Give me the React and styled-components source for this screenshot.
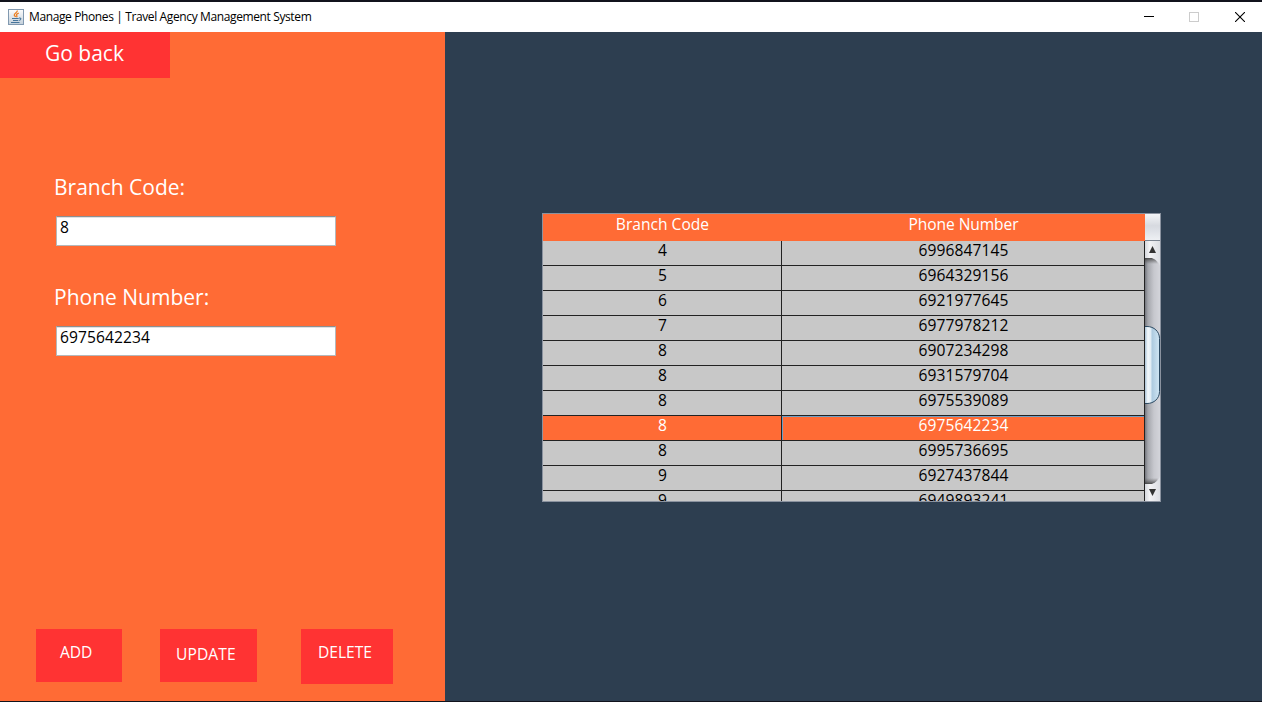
import React from "react";
import styled, { createGlobalStyle } from "styled-components";

const Global = createGlobalStyle`
  * { box-sizing: border-box; }
  body { margin: 0; background: #11131c; overflow: hidden; }
`;

const Screen = styled.div`
  width: 1262px;
  height: 702px;
  padding: 2px 0 1px;
  display: flex;
  flex-direction: column;
  background: #11131c;
  font-family: "Open Sans", "Noto Sans", sans-serif;
`;

const TitleBar = styled.header`
  height: 30px;
  flex: none;
  display: flex;
  align-items: center;
  padding-left: 8px;
  background: #fff;
`;

const Title = styled.h1`
  flex: 1;
  margin: 0 0 0 5px;
  font: 400 12px/16px "Open Sans", "Noto Sans", sans-serif;
  letter-spacing: -0.38px;
  color: #000;
`;

const WindowButton = styled.button`
  width: ${(p) => p.$w || 46}px;
  height: 30px;
  padding: 0 0 0 2px;
  border: 0;
  background: none;
  display: grid;
  place-items: center;
`;

const Body = styled.main`
  flex: 1;
  display: flex;
  min-height: 0;
`;

const FormPanel = styled.section`
  width: 445px;
  display: flex;
  flex-direction: column;
  background: #ff6b35;
`;

const Text = styled.span`
  display: block;
  white-space: nowrap;
  letter-spacing: ${(p) => p.$spacing || 0}px;
`;

const BackButton = styled.button`
  width: 170px;
  height: 46px;
  padding: 0 0 4px 45px;
  border: 0;
  background: #ff3333;
  color: #fff;
  display: flex;
  align-items: center;
  font: 400 21px/26px "Open Sans", sans-serif;
`;

const Fields = styled.div`
  padding: 95px 0 0 54px;
  display: flex;
  flex-direction: column;
  gap: 38px;
`;

const Field = styled.label`
  display: block;
  height: 72px;
  color: #fff;
  font: 400 21px/28px "Open Sans", sans-serif;
`;

const Input = styled.div`
  width: 280px;
  height: 30px;
  margin: 15px 0 0 2px;
  padding: 0 3px;
  border: 1px solid #b4b8bb;
  border-top-color: #8d8f91;
  background: #fff;
  box-shadow: inset 0 1px 0 #dfe1e3;
  color: #000;
  font: 400 15.6px/21px "Open Sans", sans-serif;
`;

const Actions = styled.div`
  margin-top: auto;
  padding: 0 52px 17px 36px;
  display: flex;
  align-items: flex-start;
`;

const ActionButton = styled.button`
  width: ${(p) => p.$w}px;
  height: ${(p) => p.$h}px;
  margin: 0 ${(p) => p.$gap || 0}px 0 0;
  padding: ${(p) => p.$top}px 0 0 ${(p) => p.$left}px;
  border: 0;
  background: #ff3333;
  color: #fff;
  display: flex;
  align-items: flex-start;
  font: 400 15.6px/20px "Open Sans", sans-serif;
`;

const DataPanel = styled.section`
  flex: 1;
  padding: 181px 0 0 97px;
  background: #2d3e50;
`;

const ScrollPane = styled.div`
  width: 619px;
  height: 289px;
  display: flex;
  border: 1px solid #8a929f;
  background: #c8c8c8;
  overflow: hidden;
`;

const Table = styled.div`
  width: 602px;
  overflow: hidden;
  font-size: 15.6px;
`;

const HeaderRow = styled.div`
  display: grid;
  grid-template-columns: 239px 363px;
  height: 27px;
  background: #ff6b35;
  color: #fff;
  text-align: center;
  line-height: 20px;
`;

const Row = styled.div`
  display: grid;
  grid-template-columns: 239px 363px;
  height: 25px;
  background: ${(p) => (p.$selected ? "#ff6b35" : "#c8c8c8")};
  color: ${(p) => (p.$selected ? "#fff" : "#000")};
`;

const Cell = styled.div`
  border-right: 1px solid #222;
  border-bottom: 1px solid #222;
  padding-left: 1px;
  text-align: center;
  line-height: 19px;
  box-shadow: ${(p) => (p.$focused ? "inset 1px 1px 0 #6f9fc4" : "none")};
`;

const ScrollSide = styled.div`
  width: 15px;
  display: flex;
  flex-direction: column;
`;

const Corner = styled.div`
  height: 27px;
  flex: none;
  border-bottom: 1px solid #7c8490;
  background: linear-gradient(#f4f5f7, #d7dae0 45%, #dcdfe5 60%, #eef0f4);
`;

const rows = [
  ["4", "6996847145"],
  ["5", "6964329156"],
  ["6", "6921977645"],
  ["7", "6977978212"],
  ["8", "6907234298"],
  ["8", "6931579704"],
  ["8", "6975539089"],
  ["8", "6975642234"],
  ["8", "6995736695"],
  ["9", "6927437844"],
  ["9", "6949893241"],
];
const selectedIndex = 7;

function JavaIcon() {
  return (
    <svg width="16" height="16" viewBox="0 0 16 16" fill="none">
      <defs>
        <linearGradient id="cup" x1="0" y1="0" x2="0" y2="1">
          <stop offset="0" stopColor="#fdfdfd" />
          <stop offset="1" stopColor="#c3cfda" />
        </linearGradient>
      </defs>
      <rect x=".5" y=".5" width="15" height="15" fill="url(#cup)" stroke="#8199b0" />
      <path d="M9.200 1.500c.8 2-3.400 2.800-2.900 4.500.2.900 1 1.300 1.200 2M10.800 4C8.500 5 8 5.700 8.800 6.700c.5.700.2 1-.3 1.500" stroke="#ec7f22" strokeWidth="1.300" />
      <path d="M4 9.500h6.700M5 11.500h5M3 13.500h8.500M11 9c2.800-.3 2.200 2.200-.3 2.500" stroke="#47759b" strokeWidth="1.100" />
    </svg>
  );
}

function ScrollBar() {
  return (
    <svg width="15" height="260" viewBox="0 0 15 260">
      <defs>
        <linearGradient id="track">
          <stop offset="0" stopColor="#74777e" />
          <stop offset=".2" stopColor="#a5a7ad" />
          <stop offset=".6" stopColor="#c7c8ce" />
          <stop offset="1" stopColor="#d3d4da" />
        </linearGradient>
        <linearGradient id="thumb">
          <stop offset="0" stopColor="#a9c3d8" />
          <stop offset=".2" stopColor="#f4f9fc" />
          <stop offset=".38" stopColor="#e2edf5" />
          <stop offset=".5" stopColor="#aecbe0" />
          <stop offset="1" stopColor="#d0e6f4" />
        </linearGradient>
        <linearGradient id="arrow">
          <stop offset="0" stopColor="#d5d8de" />
          <stop offset=".3" stopColor="#f3f3f5" />
          <stop offset="1" stopColor="#dcdee3" />
        </linearGradient>
        <linearGradient id="shade" x1="0" y1="0" x2="0" y2="1">
          <stop offset="0" stopColor="#333" stopOpacity=".8" />
          <stop offset="1" stopColor="#555" stopOpacity="0" />
        </linearGradient>
        <linearGradient id="shadeUp" x1="0" y1="1" x2="0" y2="0">
          <stop offset="0" stopColor="#333" stopOpacity=".8" />
          <stop offset="1" stopColor="#555" stopOpacity="0" />
        </linearGradient>
      </defs>
      <rect width="15" height="260" fill="url(#track)" />
      <path d="M0 17h7q5 2 6 6H0z" fill="url(#shade)" />
      <path d="M0 243h7q5-2 6-6H0z" fill="url(#shadeUp)" />
      <path d="M0 0h15v25c-1-4-4-7-8-8H0z" fill="url(#arrow)" />
      <path d="M0 260h15v-25c-1 4-4 7-8 8H0z" fill="url(#arrow)" />
      <path d="M7.500 5L11 12H4z" fill="#333" />
      <path d="M7.500 255L11 248H4z" fill="#333" />
      <path d="M0 85.500h2c7 0 12.500 5 12.500 12v53c0 7-5.500 12-12.500 12H0" fill="url(#thumb)" stroke="#2c4a63" />
    </svg>
  );
}

export default function App() {
  return (
    <Screen>
      <Global />
      <TitleBar>
        <JavaIcon />
        <Title>Manage Phones | Travel Agency Management System</Title>
        <WindowButton $w={45} aria-label="Minimize">
          <svg width="10" height="10"><path d="M0 4.500h10" stroke="#000" /></svg>
        </WindowButton>
        <WindowButton aria-label="Maximize">
          <svg width="10" height="10"><rect x=".5" y=".5" width="9" height="9" fill="none" stroke="#ccc" /></svg>
        </WindowButton>
        <WindowButton aria-label="Close">
          <svg width="10" height="10"><path d="M0 0l10 10M10 0L0 10" stroke="#000" strokeWidth="1.100" /></svg>
        </WindowButton>
      </TitleBar>
      <Body>
        <FormPanel>
          <BackButton><Text>Go back</Text></BackButton>
          <Fields>
            <Field>
              <Text>Branch Code:</Text>
              <Input><Text>8</Text></Input>
            </Field>
            <Field>
              <Text>Phone Number:</Text>
              <Input><Text $spacing={0.08}>6975642234</Text></Input>
            </Field>
          </Fields>
          <Actions>
            <ActionButton $w={86} $h={53} $gap={38} $top={13} $left={24}><Text $spacing={-0.1}>ADD</Text></ActionButton>
            <ActionButton $w={97} $h={53} $gap={44} $top={15} $left={16}><Text $spacing={0.1}>UPDATE</Text></ActionButton>
            <ActionButton $w={92} $h={55} $top={13} $left={17}><Text>DELETE</Text></ActionButton>
          </Actions>
        </FormPanel>
        <DataPanel>
          <ScrollPane>
            <Table>
              <HeaderRow>
                <Text>Branch Code</Text>
                <Text $spacing={-0.1}>Phone Number</Text>
              </HeaderRow>
              {rows.map(([code, phone], i) => (
                <Row key={phone} $selected={i === selectedIndex}>
                  <Cell>{code}</Cell>
                  <Cell $focused={i === selectedIndex}><Text $spacing={0.08}>{phone}</Text></Cell>
                </Row>
              ))}
            </Table>
            <ScrollSide>
              <Corner />
              <ScrollBar />
            </ScrollSide>
          </ScrollPane>
        </DataPanel>
      </Body>
    </Screen>
  );
}
